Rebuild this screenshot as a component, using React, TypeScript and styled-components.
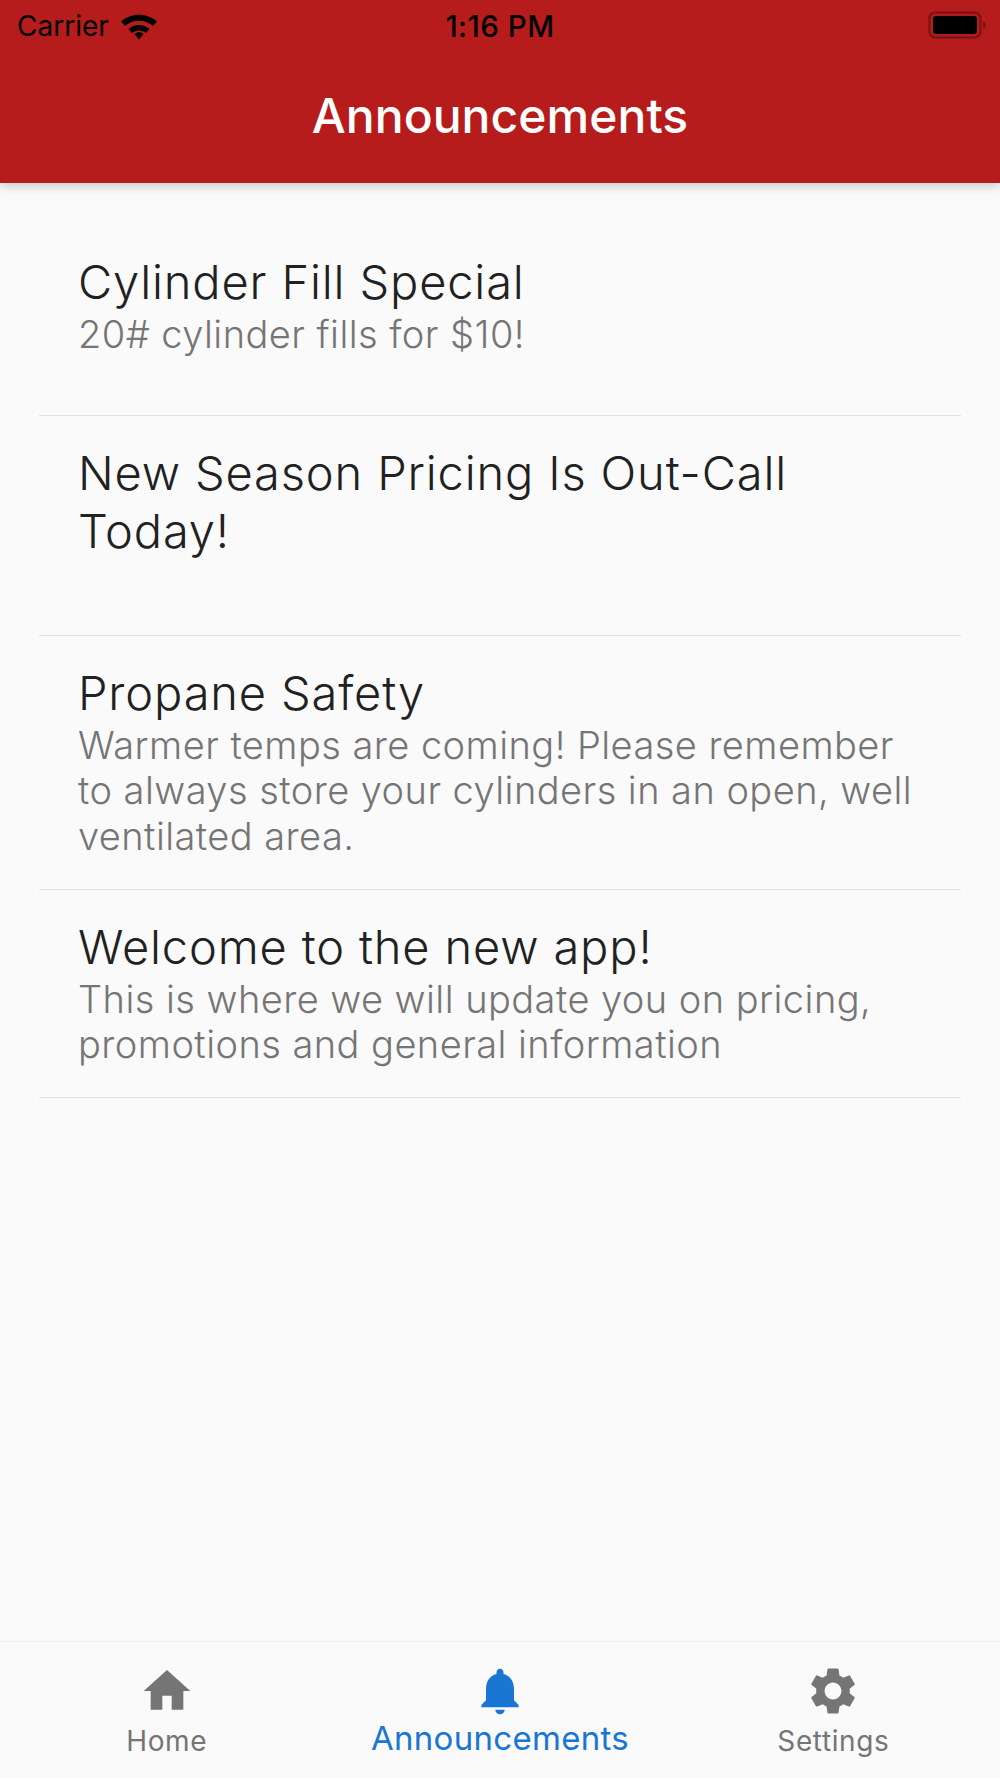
import React from 'react';
import styled, { createGlobalStyle } from 'styled-components';
import { MdHome, MdNotifications, MdSettings } from 'react-icons/md';

const GlobalStyle = createGlobalStyle`
    html, body {
        margin: 0;
        padding: 0;
        background: #fafafa;
    }

    body {
        font-family: Inter, "Liberation Sans", sans-serif;
    }
`;

const Screen = styled.div`
    width: 1000px;
    height: 1778px;
    display: flex;
    flex-direction: column;
    background: #fafafa;
    overflow: hidden;
`;

const Header = styled.header`
    height: 183px;
    flex: none;
    display: flex;
    flex-direction: column;
    background: #b71c1c;
    box-shadow: 0 3px 10px rgba(0, 0, 0, 0.2);
    position: relative;
    z-index: 1;
`;

const StatusBar = styled.div`
    height: 52px;
    padding: 0 17px;
    display: grid;
    grid-template-columns: 1fr auto 1fr;
    align-items: center;
    color: #000;
`;

const Carrier = styled.div`
    display: flex;
    align-items: center;
    gap: 11px;
    font-size: 28px;
`;

const Clock = styled.div`
    font-size: 29.5px;
    font-weight: 500;
    letter-spacing: 0.5px;
`;

const BatteryWrap = styled.div`
    justify-self: end;
    display: flex;
    margin: -2px -5px 0 0;
`;

const Title = styled.h1`
    margin: 0;
    padding-top: 36px;
    text-align: center;
    color: #fff;
    font-size: 48px;
    font-weight: 500;
    line-height: 55px;
    letter-spacing: 0.05px;
`;

const List = styled.main`
    flex: 1;
    padding: 0 39px;
`;

const Item = styled.article<{ $height: number; $top: number }>`
    height: ${(p) => p.$height}px;
    box-sizing: border-box;
    padding: ${(p) => p.$top}px 39px 0;
    border-bottom: 1px solid #e3e3e3;
`;

const ItemTitle = styled.h2`
    margin: 0 0 1px;
    color: #212121;
    font-size: 47px;
    font-weight: 350;
    line-height: 58px;
    letter-spacing: 0.85px;
`;

const ItemBody = styled.p`
    margin: 0;
    color: #757575;
    font-size: 38px;
    font-weight: 350;
    line-height: 45.5px;
    letter-spacing: 0.45px;
`;

const TabBar = styled.nav`
    height: 136px;
    flex: none;
    display: grid;
    grid-template-columns: repeat(3, 1fr);
    background: #fafafa;
    border-top: 1px solid #f0f0f0;
`;

const Tab = styled.div<{ $active?: boolean }>`
    display: flex;
    flex-direction: column;
    align-items: center;
    padding-top: 21px;
    color: ${(p) => (p.$active ? '#1976d2' : '#757575')};
`;

const TabLabel = styled.span<{ $active?: boolean }>`
    margin-top: ${(p) => (p.$active ? 0 : 3)}px;
    font-size: ${(p) => (p.$active ? 33 : 28)}px;
    line-height: 38px;
    letter-spacing: ${(p) => (p.$active ? 0.3 : 0.6)}px;
`;

const Battery = () => (
    <svg width="60" height="30" viewBox="0 0 60 30">
        <rect x="1.5" y="2.5" width="51" height="25" rx="6" fill="none" stroke="#7f1414" strokeWidth="2.5" />
        <rect x="5" y="6" width="44" height="18" rx="3" fill="#000" />
        <path d="M55 11 C57 12 58 13.5 58 15 C58 16.5 57 18 55 19 Z" fill="#7f1414" />
    </svg>
);

const Wifi = () => (
    <svg width="38" height="28" viewBox="0 0 38 28">
        <path d="M1 9.5 C11 0.5 27 0.5 37 9.5 L33 14 C25 7 13 7 5 14 Z" fill="#000" />
        <path d="M8.5 17 C14.5 11.5 23.5 11.5 29.5 17 L26 21 C22 17.5 16 17.5 12 21 Z" fill="#000" />
        <path d="M14.5 22 C17.5 19.5 20.5 19.5 23.5 22 L19 27.5 Z" fill="#000" />
    </svg>
);

const announcements = [
    { title: 'Cylinder Fill Special', body: '20# cylinder fills for $10!', height: 233, top: 69.5 },
    { title: 'New Season Pricing Is Out-Call Today!', body: '', height: 220, top: 27.5 },
    {
        title: 'Propane Safety',
        body: 'Warmer temps are coming! Please remember to always store your cylinders in an open, well ventilated area.',
        height: 254,
        top: 27.5,
    },
    {
        title: 'Welcome to the new app!',
        body: 'This is where we will update you on pricing, promotions and general information',
        height: 208,
        top: 27.5,
    },
];

const App = () => (
    <>
        <GlobalStyle />
        <Screen>
            <Header>
                <StatusBar>
                    <Carrier>
                        Carrier
                        <Wifi />
                    </Carrier>
                    <Clock>1:16 PM</Clock>
                    <BatteryWrap>
                        <Battery />
                    </BatteryWrap>
                </StatusBar>
                <Title>Announcements</Title>
            </Header>
            <List>
                {announcements.map((a) => (
                    <Item key={a.title} $height={a.height} $top={a.top}>
                        <ItemTitle>{a.title}</ItemTitle>
                        {a.body && <ItemBody>{a.body}</ItemBody>}
                    </Item>
                ))}
            </List>
            <TabBar>
                <Tab>
                    <MdHome size={56} />
                    <TabLabel>Home</TabLabel>
                </Tab>
                <Tab $active>
                    <MdNotifications size={56} />
                    <TabLabel $active>Announcements</TabLabel>
                </Tab>
                <Tab>
                    <MdSettings size={56} />
                    <TabLabel>Settings</TabLabel>
                </Tab>
            </TabBar>
        </Screen>
    </>
);

export default App;
